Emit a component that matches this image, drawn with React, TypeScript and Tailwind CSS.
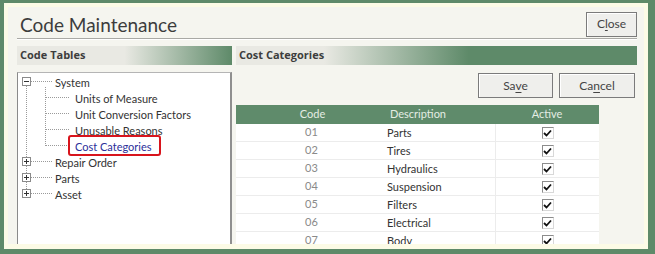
import React from "react";

const rows = [
  { code: "01", desc: "Parts" },
  { code: "02", desc: "Tires" },
  { code: "03", desc: "Hydraulics" },
  { code: "04", desc: "Suspension" },
  { code: "05", desc: "Filters" },
  { code: "06", desc: "Electrical" },
  { code: "07", desc: "Body" },
];

const treeRows = [
  { label: "System", child: false },
  { label: "Units of Measure", child: true },
  { label: "Unit Conversion Factors", child: true },
  { label: "Unusable Reasons", child: true },
  { label: "Cost Categories", child: true, active: true },
  { label: "Repair Order", child: false },
  { label: "Parts", child: false },
  { label: "Asset", child: false },
];

const font = { fontFamily: 'Lato, "Open Sans", "Liberation Sans", sans-serif' };

const Btn = ({ pre, u, post, w }: { pre: string; u: string; post: string; w: string }) => (
  <button
    className={`${w} h-[25px] border border-[#7b7b7b] bg-[#efefec] text-[12px] text-[#444] shadow-[inset_1px_1px_0_#fff]`}
  >
    {pre}
    <span className="underline underline-offset-2">{u}</span>
    {post}
  </button>
);

const ExpandBox = ({ y, open }: { y: number; open?: boolean }) => (
  <g>
    <rect x={4.5} y={y - 4.5} width={8} height={8} fill="#fff" stroke="#8a8a8a" />
    <line x1={6} y1={y - 0.5} x2={11} y2={y - 0.5} stroke="#333" />
    {!open && <line x1={8.5} y1={y - 3} x2={8.5} y2={y + 2} stroke="#333" />}
  </g>
);

const TreeLines = () => (
  <svg className="pointer-events-none absolute left-0 top-0" width="213" height="140">
    <g stroke="#9a9a9a" strokeDasharray="1 1">
      <line x1={8.5} y1={13} x2={8.5} y2={121} />
      {[9, 89, 105, 121].map((y) => (
        <line key={y} x1={13} y1={y - 0.5} x2={35} y2={y - 0.5} />
      ))}
      <line x1={27.5} y1={14} x2={27.5} y2={73} />
      {[25, 41, 57, 73].map((y) => (
        <line key={y} x1={28} y1={y - 0.5} x2={52} y2={y - 0.5} />
      ))}
    </g>
    <ExpandBox y={9} open />
    <ExpandBox y={89} />
    <ExpandBox y={105} />
    <ExpandBox y={121} />
  </svg>
);

const CheckBox = () => (
  <div className="flex h-[12px] w-[12px] items-center justify-center border border-[#8c8c8c] border-b-[#d8d8d8] border-r-[#d8d8d8] bg-white">
    <svg width="9" height="8" viewBox="0 0 9 8">
      <path d="M1 4 L3.5 6.5 L8 1.5" fill="none" stroke="#111" strokeWidth="1.8" />
    </svg>
  </div>
);

export default function App() {
  return (
    <div
      className="h-[254px] w-[655px] bg-[#5e8a69] pb-[5px] pl-[4px] pr-[7px] pt-[3px]"
      style={font}
    >
      <div className="flex h-full flex-col overflow-hidden border-[#fcfbe6] border-b-[5px] border-l-[4px] border-r-[4px] border-t-[4px] bg-[#f5f5ef] pl-[9px] pr-[7px]">
        {/* title */}
        <div className="mt-[7px] flex h-[20px] items-center justify-between">
          <span className="ml-[3px] text-[19px] leading-none text-[#3c3c3c]">Code Maintenance</span>
          <Btn w="w-[51px] h-[20px]" pre="C" u="l" post="ose" />
        </div>
        <div className="mt-[4px] h-[2px] border-b border-t border-b-white border-t-[#a9a9a5]" />

        {/* section bars */}
        <div
          className="mt-[6px] flex gap-[4px]"
          style={{ fontFamily: '"Open Sans", sans-serif' }}
        >
          <div className="flex h-[19px] w-[215px] items-center bg-[linear-gradient(to_right,#e9e9e3_50%,#5e8a69_100%)] pl-[3px] text-[11px] font-bold text-[#3d3d3d]">
            Code Tables
          </div>
          <div className="flex h-[19px] flex-1 items-center bg-[linear-gradient(to_right,#e9e9e3_22%,#5e8a69_58%)] pl-[3px] text-[11px] font-bold text-[#3d3d3d]">
            Cost Categories
          </div>
        </div>

        <div className="mt-[7px] flex min-h-0 flex-1 gap-[4px]">
          {/* tree */}
          <div className="relative w-[215px] border border-l-[#8a8a8a] border-r-2 border-r-[#8f8f8f] border-t-[#b5b5b5] border-b-0 bg-white pt-[1px] text-[11px] text-[#333]">
            <TreeLines />
            {treeRows.map((r) => (
              <div
                key={r.label}
                className={`flex h-4 items-center leading-none ${r.child ? "pl-[57px]" : "pl-[37px]"} ${r.active ? "text-[#2b2f9a]" : ""}`}
              >
                {r.label}
              </div>
            ))}
            <div className="pointer-events-none absolute left-[50px] top-[62px] h-[21px] w-[93px] rounded-[3px] border-2 border-[#d8141c]" />
          </div>

          {/* right panel */}
          <div className="flex min-w-0 flex-1 flex-col">
            <div className="mt-[1px] flex justify-end gap-[6px] pr-[2px]">
              <Btn w="w-[75px]" pre="Sa" u="v" post="e" />
              <Btn w="w-[76px]" pre="Ca" u="n" post="cel" />
            </div>
            <div className="mt-[7px] w-[363px] flex-1 overflow-hidden bg-white">
              <div className="flex h-[19px] items-center bg-[#5f8b6b] text-[11px] text-[#e4ede4]">
                <div className="w-[147px] pl-[6px] text-center">Code</div>
                <div className="w-[112px] pl-[7px]">Description</div>
                <div className="flex-1 text-center">Active</div>
              </div>
              {rows.map((r) => (
                <div key={r.code} className="flex h-[18px] items-center border-b border-[#ececec] text-[11px]">
                  <div className="w-[147px] pl-[4px] text-center text-[#8a8a8a]">{r.code}</div>
                  <div className="h-full w-[112px] pl-[4px] leading-[18px] text-[#333]">{r.desc}</div>
                  <div className="flex h-full flex-1 items-center justify-center border-l border-[#ececec]">
                    <CheckBox />
                  </div>
                </div>
              ))}
            </div>
          </div>
        </div>
      </div>
    </div>
  );
}
